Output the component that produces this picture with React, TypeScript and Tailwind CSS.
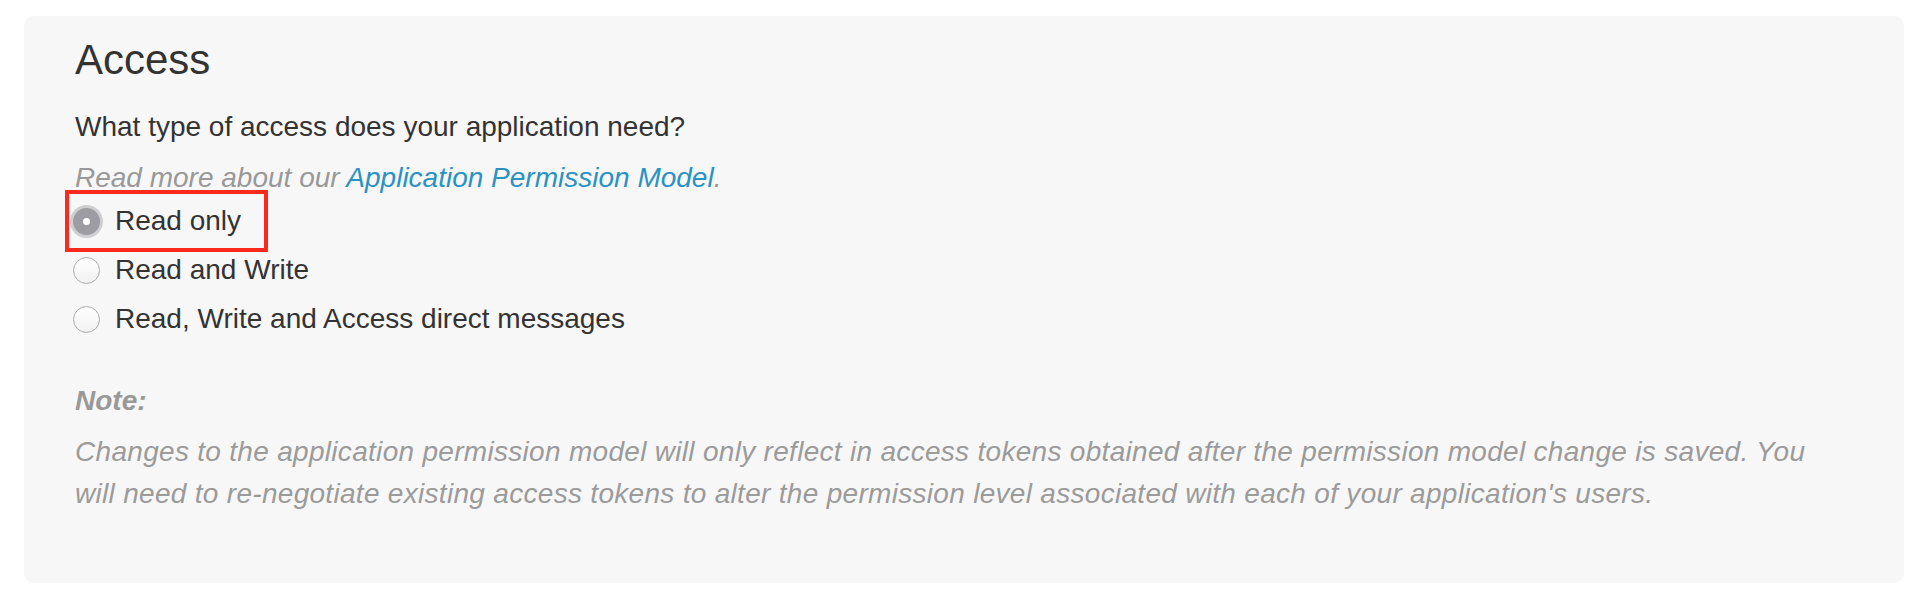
import React from 'react';

const options = [
  { label: 'Read only', checked: true },
  { label: 'Read and Write', checked: false },
  { label: 'Read, Write and Access direct messages', checked: false },
];

const Radio: React.FC<{ checked: boolean }> = ({ checked }) =>
  checked ? (
    <span className="w-[27px] h-[27px] rounded-full bg-[#9d9ca2] shadow-[0_0_0_3px_#cfcfd1] flex items-center justify-center shrink-0">
      <span className="w-[7px] h-[7px] rounded-full bg-white" />
    </span>
  ) : (
    <span className="w-[27px] h-[27px] rounded-full border border-[#acacac] bg-gradient-to-b from-white to-[#f1f1f1] shrink-0" />
  );

export default function App() {
  return (
    <div className="min-h-[600px] bg-white pt-4 pl-6 pr-[22px] font-['Liberation_Sans',Arial,Helvetica,sans-serif]">
      <div className="h-[567px] rounded-[10px] bg-[#f7f7f7] pl-[51px] pt-[21px]">
        <h2 className="text-[42px] leading-[1.1] text-[#333]">Access</h2>

        <p className="mt-[23px] text-[28px] leading-[42px] text-[#333]">
          What type of access does your application need?
        </p>
        <p className="mt-[9px] text-[28px] leading-[42px] italic text-[#999]">
          Read more about our{' '}
          <a href="#" className="text-[#2b92c4]">
            Application Permission Model
          </a>
          .
        </p>

        {/* Permission options */}
        <div className="flex flex-col gap-[7px] mt-px">
          {options.map((o) => (
            <label key={o.label} className="relative flex items-center gap-[15px] h-[42px] -ml-[2px] text-[28px] text-[#333]">
              <Radio checked={o.checked} />
              <span>{o.label}</span>
              {o.checked && (
                <span className="absolute left-[-8px] top-[-10px] w-[203px] h-[62px] border-[4px] border-[#fc2a1e] pointer-events-none" />
              )}
            </label>
          ))}
        </div>

        <p className="mt-[40px] text-[28px] leading-[42px] italic font-bold text-[#999]">Note:</p>
        <p className="mt-[9px] max-w-[1752px] text-[28px] leading-[42px] italic tracking-[0.3px] text-[#9b9b9b]">
          Changes to the application permission model will only reflect in access tokens obtained after the
          permission model change is saved. You will need to re-negotiate existing access tokens to alter the
          permission level associated with each of your application's users.
        </p>
      </div>
    </div>
  );
}
